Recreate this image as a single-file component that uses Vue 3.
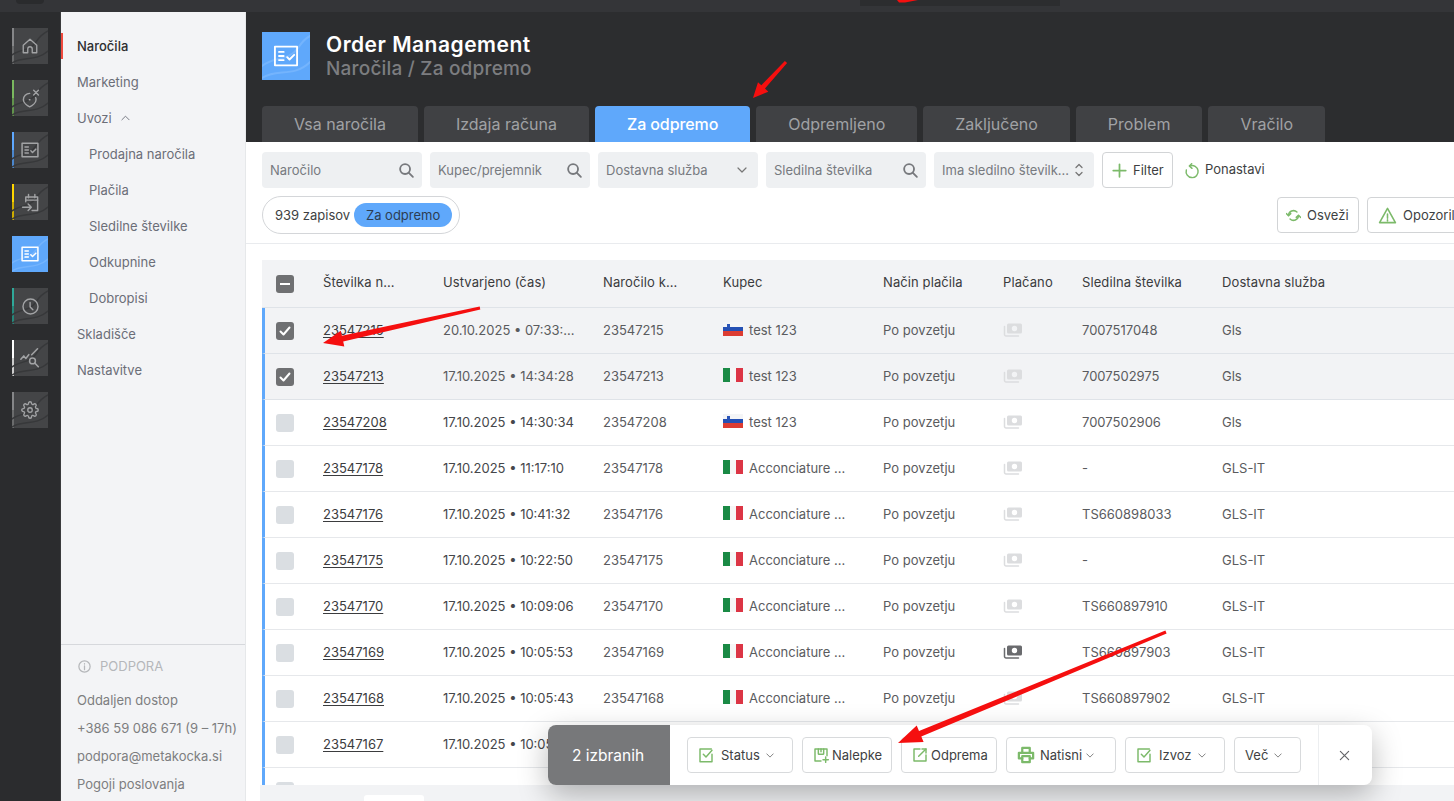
<script setup>
const icons = {
  home: ['M3 11 12 3l9 8v10h-6v-5a3 3 0 0 0-6 0v5H3z'],
  pin: ['M11 5.500a8 8 0 0 0-8 8c0 3.800 5 7.600 8 9 3-1.400 8-5.200 8-9 0-.9-.1-1.600-.4-2.400', 'M10.500 13.500h.8', 'M16 1.500l6 6M22 1.500l-6 6'],
  order: ['M2.500 4h19v16h-19z', 'M6 8.500h4M6 12h4M6 15.500h4', 'M13 13l2 2 4-4'],
  cal: ['M6 11V5h15v17h-7', 'M6 9h15', 'M9.500 2V6M17.500 2V6', 'M2 18h11M9 14l4 4-4 4'],
  clock: ['M12 2.500a9.500 9.500 0 1 1 0 19 9.500 9.500 0 0 1 0-19z', 'M11.500 7v5.500l3.500 3.500'],
  chart: ['M1 13.500 4.500 9.500l2.500 3 3.500-4.500', 'M14 8l7-7', 'M15 12a3.500 3.500 0 1 1 0 7 3.500 3.500 0 0 1 0-7z', 'M17.700 18 22 22.500'],
  gear: ['M12 9a3 3 0 1 1 0 6 3 3 0 0 1 0-6z', 'M19.4 15a1.65 1.65 0 0 0 .33 1.82l.06.06a2 2 0 0 1 0 2.83 2 2 0 0 1-2.83 0l-.06-.06a1.65 1.65 0 0 0-1.82-.33 1.65 1.65 0 0 0-1 1.51V21a2 2 0 0 1-2 2 2 2 0 0 1-2-2v-.09A1.65 1.65 0 0 0 9 19.4a1.65 1.65 0 0 0-1.82.33l-.06.06a2 2 0 0 1-2.83 0 2 2 0 0 1 0-2.83l.06-.06a1.65 1.65 0 0 0 .33-1.82 1.65 1.65 0 0 0-1.51-1H3a2 2 0 0 1-2-2 2 2 0 0 1 2-2h.09A1.65 1.65 0 0 0 4.6 9a1.65 1.65 0 0 0-.33-1.82l-.06-.06a2 2 0 0 1 0-2.83 2 2 0 0 1 2.83 0l.06.06a1.65 1.65 0 0 0 1.82.33H9a1.65 1.65 0 0 0 1-1.51V3a2 2 0 0 1 2-2 2 2 0 0 1 2 2v.09a1.65 1.65 0 0 0 1 1.51 1.65 1.65 0 0 0 1.82-.33l.06-.06a2 2 0 0 1 2.83 0 2 2 0 0 1 0 2.83l-.06.06a1.65 1.65 0 0 0-.33 1.82V9a1.65 1.65 0 0 0 1.51 1H21a2 2 0 0 1 2 2 2 2 0 0 1-2 2h-.09a1.65 1.65 0 0 0-1.51 1z'],
  check: ['M21 11v11H3V3h17', 'M8 11l4 4 9-10'],
  label: ['M12 21H3V3h18v10', 'M8 3v7a1 1 0 0 0 1 1h6a1 1 0 0 0 1-1V3', 'M12 7V3', 'M19 15v8M15 19h8'],
  send: ['M12 3H3v18h18v-9', 'M10 14 21 3', 'M15 3h6v6'],
  print: ['M7 8V2.500h10V8', 'M7 16.500H2.500V9h19v7.500H17', 'M7 13.500h10v8H7z'],
  search: ['M10 3a7 7 0 1 1 0 14 7 7 0 0 1 0-14z', 'M15 15 21 21'],
  plus: ['M12 2v20M2 12h20'],
  reset: ['M9 4.500a9 9 0 1 1-5.500 6', 'M11.500 1 8 4.500 12 8'],
  sync: ['M4 12a8 8 0 0 1 13.500-5.500', 'M20 12a8 8 0 0 1-13.500 5.500', 'M0.500 9 4 12.500 7.500 9', 'M16.500 15 20 11.500 23.500 15'],
  warn: ['M12 3 2 21h20z', 'M12 10v5.500M12 17.500v1.500'],
  info: ['M12 3a9 9 0 1 1 0 18 9 9 0 0 1 0-18z', 'M12 11v6M12 7.500v.5'],
}
const rail = [
  { i: 'home', c: '#858688', s: 18 }, { i: 'pin', c: '#7ab85f', s: 19 }, { i: 'order', c: '#5ea8ff', s: 20 }, { i: 'cal', c: '#ffd600', s: 19 },
  { i: 'order', c: '#5ea8ff', active: true, s: 20 }, { i: 'clock', c: '#2fa899', s: 19 }, { i: 'chart', c: '#ffffff', s: 20 }, { i: 'gear', c: '#858688', s: 18 },
]
const nav = [
  { t: 'Naročila', active: true }, { t: 'Marketing' }, { t: 'Uvozi', open: true },
  { t: 'Prodajna naročila', sub: true }, { t: 'Plačila', sub: true }, { t: 'Sledilne številke', sub: true },
  { t: 'Odkupnine', sub: true }, { t: 'Dobropisi', sub: true }, { t: 'Skladišče' }, { t: 'Nastavitve' },
]
const tabs = ['Vsa naročila', 'Izdaja računa', 'Za odpremo', 'Odpremljeno', 'Zaključeno', 'Problem', 'Vračilo']
const filters = [
  { t: 'Naročilo', k: 'search' }, { t: 'Kupec/prejemnik', k: 'search' }, { t: 'Dostavna služba', k: 'down' },
  { t: 'Sledilna številka', k: 'search' }, { t: 'Ima sledilno številk...', k: 'updown' },
]
const heads = ['Številka n...', 'Ustvarjeno (čas)', 'Naročilo k...', 'Kupec', 'Način plačila', 'Plačano', 'Sledilna številka', 'Dostavna služba']
const a = 'Acconciature ...'
const rows = [
  { n: '23547215', d: '20.10.2025 • 07:33:...', f: 'si', b: 'test 123', s: '7007517048', c: 'Gls', sel: true },
  { n: '23547213', d: '17.10.2025 • 14:34:28', f: 'it', b: 'test 123', s: '7007502975', c: 'Gls', sel: true },
  { n: '23547208', d: '17.10.2025 • 14:30:34', f: 'si', b: 'test 123', s: '7007502906', c: 'Gls' },
  { n: '23547178', d: '17.10.2025 • 11:17:10', f: 'it', b: a, s: '-', c: 'GLS-IT' },
  { n: '23547176', d: '17.10.2025 • 10:41:32', f: 'it', b: a, s: 'TS660898033', c: 'GLS-IT' },
  { n: '23547175', d: '17.10.2025 • 10:22:50', f: 'it', b: a, s: '-', c: 'GLS-IT' },
  { n: '23547170', d: '17.10.2025 • 10:09:06', f: 'it', b: a, s: 'TS660897910', c: 'GLS-IT' },
  { n: '23547169', d: '17.10.2025 • 10:05:53', f: 'it', b: a, s: 'TS660897903', c: 'GLS-IT', paid: true },
  { n: '23547168', d: '17.10.2025 • 10:05:43', f: 'it', b: a, s: 'TS660897902', c: 'GLS-IT' },
  { n: '23547167', d: '17.10.2025 • 10:05', covered: true },
  { n: '', d: '', covered: true },
]
const actions = [
  { t: 'Status', i: 'check', menu: true, w: 106 }, { t: 'Nalepke', i: 'label', w: 90, tight: true }, { t: 'Odprema', i: 'send', w: 96, tight: true },
  { t: 'Natisni', i: 'print', menu: true, w: 110, heavy: true }, { t: 'Izvoz', i: 'check', menu: true, w: 100 }, { t: 'Več', menu: true, w: 67 },
]
function arrow(x1, y1, x2, y2, hl, hw, w) {
  const L = Math.hypot(x2 - x1, y2 - y1)
  const ux = (x2 - x1) / L, uy = (y2 - y1) / L, nx = -uy, ny = ux
  const bx = x2 - ux * hl, by = y2 - uy * hl
  const p = [
    [x1 + nx * 1.5, y1 + ny * 1.5], [bx + nx * w, by + ny * w], [bx + nx * hw, by + ny * hw], [x2, y2],
    [bx - nx * hw, by - ny * hw], [bx - nx * w, by - ny * w], [x1 - nx * 1.5, y1 - ny * 1.5],
  ]
  return p.map(q => q[0].toFixed(1) + ',' + q[1].toFixed(1)).join(' ')
}
const arrows = [
  arrow(786, 62, 753, 98, 15, 7, 2.5), arrow(480, 308, 323, 343, 20, 8, 3), arrow(1166, 632, 898, 743, 24, 9, 3),
]
</script>

<template>
  <div class="app">
    <header class="topbar">
      <span class="top-a"></span>
      <span class="top-b"></span>
    </header>
    <div class="body">
      <nav class="rail">
        <div v-for="(r, x) in rail" :key="x" class="tile" :class="{ on: r.active }">
          <i class="strip" :style="{ background: r.c }"></i>
          <svg class="waves" viewBox="0 0 36 36"><path d="M0 27C9 20 17 24 24 14 28 8 32 5 36 3M0 35C10 28 24 34 36 23" /></svg>
          <svg class="ic" viewBox="0 0 24 24" :style="{ width: r.s + 'px', height: r.s + 'px' }"><path v-for="d in icons[r.i]" :key="d" :d="d" /></svg>
        </div>
      </nav>
      <aside class="side">
        <ul class="menu">
          <li v-for="n in nav" :key="n.t" :class="{ active: n.active, sub: n.sub }">
            {{ n.t }}
            <svg v-if="n.open" class="up" viewBox="0 0 10 6"><path d="M1 5l4-4 4 4" /></svg>
          </li>
        </ul>
        <div class="support">
          <div class="sup-h">
            <svg viewBox="0 0 24 24"><path v-for="d in icons.info" :key="d" :d="d" /></svg>
            PODPORA
          </div>
          <p>Oddaljen dostop</p>
          <p>+386 59 086 671 (9 – 17h)</p>
          <p>podpora@metakocka.si</p>
          <p>Pogoji poslovanja</p>
        </div>
      </aside>
      <main class="main">
        <section class="hero">
          <div class="title-row">
            <div class="logo">
              <svg class="logo-w" viewBox="0 0 48 48"><path d="M0 34C12 24 26 30 36 16 40 10 44 6 48 4M0 46C14 36 32 46 48 30" /></svg>
              <svg class="logo-i" viewBox="0 0 24 24"><path v-for="d in icons.order" :key="d" :d="d" /></svg>
            </div>
            <div class="titles">
              <h1>Order Management</h1>
              <h2>Naročila / Za odpremo</h2>
            </div>
          </div>
          <div class="tabs">
            <div v-for="t in tabs" :key="t" class="tab" :class="{ on: t === 'Za odpremo' }">{{ t }}</div>
          </div>
        </section>
        <section class="tools">
          <div class="filters">
            <div v-for="f in filters" :key="f.t" class="field">
              <span>{{ f.t }}</span>
              <svg v-if="f.k === 'search'" class="f-search" viewBox="0 0 24 24"><path v-for="d in icons.search" :key="d" :d="d" /></svg>
              <svg v-else-if="f.k === 'down'" class="f-down" viewBox="0 0 10 6"><path d="M1 1l4 4 4-4" /></svg>
              <svg v-else class="f-ud" viewBox="0 0 10 16"><path d="M2 5.500 5 2.500l3 3M2 10.500l3 3 3-3" /></svg>
            </div>
            <button class="btn filter">
              <svg class="g-ic" viewBox="0 0 24 24"><path v-for="d in icons.plus" :key="d" :d="d" /></svg>
              Filter
            </button>
            <div class="reset">
              <svg class="g-ic" viewBox="0 0 24 24"><path v-for="d in icons.reset" :key="d" :d="d" /></svg>
              Ponastavi
            </div>
          </div>
          <div class="second">
            <div class="chip">939 zapisov <span class="pill">Za odpremo</span></div>
            <button class="btn refresh">
              <svg class="g-ic" viewBox="0 0 24 24"><path v-for="d in icons.sync" :key="d" :d="d" /></svg>
              Osveži
            </button>
            <button class="btn alert">
              <svg class="g-ic big" viewBox="0 0 24 24"><path v-for="d in icons.warn" :key="d" :d="d" /></svg>
              Opozorila
            </button>
          </div>
        </section>
        <section class="table-wrap">
          <div class="table">
            <div class="grid thead">
              <div class="cb-cell"><span class="cb dark dash"></span></div>
              <div v-for="h in heads" :key="h">{{ h }}</div>
            </div>
            <div v-for="(r, x) in rows" :key="x" class="grid row" :class="{ sel: r.sel }">
              <div class="cb-cell">
                <span class="cb" :class="{ dark: r.sel }">
                  <svg v-if="r.sel" viewBox="0 0 18 18"><path d="M4.500 9.500l3 3 6-7" /></svg>
                </span>
              </div>
              <div><a class="link">{{ r.n }}</a></div>
              <div class="date">{{ r.d }}</div>
              <template v-if="!r.covered">
                <div>{{ r.n }}</div>
                <div class="buyer">
                  <span class="flag" :class="r.f"><i></i><i></i><i></i></span>
                  {{ r.b }}
                </div>
                <div>Po povzetju</div>
                <div>
                  <svg class="cash" :class="{ paid: r.paid }" viewBox="0 0 20 16">
                    <path class="cash-a" d="M1.500 4.500v8a1.500 1.500 0 0 0 1.500 1.500h12.500" />
                    <path class="cash-b" fill-rule="evenodd" d="M5.500 1.500h12a1.500 1.500 0 0 1 1.500 1.500v7a1.500 1.500 0 0 1-1.500 1.500h-12A1.500 1.500 0 0 1 4 10V3a1.500 1.500 0 0 1 1.500-1.500zM11.500 3.800a2.700 2.700 0 1 0 0 5.400 2.700 2.700 0 0 0 0-5.400z" />
                  </svg>
                </div>
                <div>{{ r.s }}</div>
                <div>{{ r.c }}</div>
              </template>
            </div>
          </div>
          <footer class="foot"><span></span></footer>
        </section>
      </main>
    </div>

    <div class="actionbar">
      <div class="count">2 izbranih</div>
      <div class="acts">
        <button v-for="b in actions" :key="b.t" class="act" :class="{ tight: b.tight, heavy: b.heavy }" :style="{ width: b.w + 'px' }">
          <svg v-if="b.i" class="g-ic act-i" viewBox="0 0 24 24"><path v-for="d in icons[b.i]" :key="d" :d="d" /></svg>
          <span>{{ b.t }}</span>
          <svg v-if="b.menu" class="mini" viewBox="0 0 10 6"><path d="M1 1l4 4 4-4" /></svg>
        </button>
      </div>
      <div class="close">
        <svg viewBox="0 0 12 12"><path d="M1.500 1.500l9 9M10.500 1.500l-9 9" /></svg>
      </div>
    </div>

    <svg class="overlay" viewBox="0 0 1454 801">
      <polygon points="897,0 918,0 905,2.500 899,2.500" />
      <polygon v-for="p in arrows" :key="p" :points="p" />
    </svg>
  </div>
</template>

<style>
html, body { margin: 0; overflow: hidden; }
</style>

<style scoped>
* { box-sizing: border-box; }
.app { position: relative; width: 1454px; height: 801px; overflow: hidden; display: flex; flex-direction: column; font: 13px "Inter", "Liberation Sans", sans-serif; color: #555; background: #fff; }
svg path { fill: none; stroke: currentColor; stroke-linecap: round; stroke-linejoin: round; }
.topbar { height: 12px; flex: none; background: #343538; position: relative; }
.top-a { position: absolute; left: 16px; top: 0; width: 28px; height: 4px; background: #2a2b2d; border-radius: 0 0 4px 4px; }
.top-b { position: absolute; left: 860px; top: 0; width: 200px; height: 6px; background: #2c2d2f; }
.body { flex: 1; display: flex; min-height: 0; }

.rail { width: 61px; flex: none; background: #2b2c2e; padding: 16px 0 0 12px; display: flex; flex-direction: column; gap: 16px; border-right: 1px solid #3a3b3d; }
.tile { position: relative; width: 36px; height: 36px; background: #444547; display: flex; align-items: center; justify-content: center; color: #a2a3a5; }
.tile.on { background: #5fa8fb; color: #fff; }
.strip { position: absolute; left: 0; top: 0; bottom: 0; width: 2px; }
.strip::after { content: ""; position: absolute; inset: 50% 0 0; background: rgba(0, 0, 0, .2); }
.tile.on .strip { display: none; }
.waves { position: absolute; inset: 0; width: 36px; height: 36px; }
.waves path { stroke: #37383a; stroke-width: 1.400; }
.tile.on .waves path { stroke: #74b4fd; }
.ic { position: relative; }
.ic path { stroke-width: 1.800; }

.side { width: 185px; flex: none; background: #f3f4f6; border-right: 1px solid #e6e8ea; display: flex; flex-direction: column; color: #6b6e78; }
.menu { list-style: none; margin: 16px 0 0; padding: 0; flex: 1; }
.menu li { position: relative; height: 36px; line-height: 36px; padding-left: 16px; }
.menu li.sub { padding-left: 28px; }
.menu li.active { color: #2d2e30; font-weight: 500; }
.menu li.active::before { content: ""; position: absolute; left: 0; top: 5px; width: 2px; height: 26px; background: #f04a3e; }
.up { width: 9px; height: 6px; margin: 0 0 2px 6px; }
.up path { stroke-width: 1; }
.support { border-top: 1px solid #d6d8dc; padding: 11px 0 0 16px; height: 157px; color: #7d7e80; }
.support p { margin: 0; height: 28px; line-height: 28px; white-space: nowrap; }
.sup-h { display: flex; align-items: center; gap: 8px; color: #b5b7ba; height: 20px; margin-bottom: 10px; }
.sup-h svg { width: 15px; height: 15px; }
.sup-h path { stroke-width: 2; }

.main { flex: 1; min-width: 0; display: flex; flex-direction: column; }
.hero { height: 130px; flex: none; background: #2c2d2f; padding: 20px 0 0 16px; display: flex; flex-direction: column; justify-content: space-between; }
.title-row { display: flex; gap: 16px; align-items: flex-start; }
.titles { padding-top: 1px; }
.logo { position: relative; width: 48px; height: 48px; background: #5fa8fb; display: flex; align-items: center; justify-content: center; color: #fff; }
.logo-w { position: absolute; inset: 0; }
.logo-w path { stroke: #74b4fd; stroke-width: 2; }
.logo-i { position: relative; width: 28px; height: 28px; }
.logo-i path { stroke-width: 1.600; }
h1 { margin: 0; font-size: 21px; line-height: 24px; font-weight: 600; color: #fff; letter-spacing: .5px; }
h2 { margin: 0; font-size: 19px; line-height: 24px; font-weight: 500; color: #7c7d80; letter-spacing: .2px; }
.tabs { display: flex; gap: 6px; }
.tab { height: 36px; line-height: 37px; padding: 0 32px; background: #404144; color: #a0a2a5; border-radius: 4px 4px 0 0; font-size: 16px; white-space: nowrap; }
.tab.on { background: #5fa8fb; color: #fff; font-weight: 500; letter-spacing: -.1px; }

.tools { flex: none; height: 102px; padding: 10px 0 0 16px; border-bottom: 1px solid #e9ebee; }
.filters { display: flex; gap: 8px; height: 36px; }
.field { width: 160px; height: 36px; background: #eef0f2; border-radius: 4px; padding: 0 8px; display: flex; align-items: center; justify-content: space-between; color: #777a80; white-space: nowrap; }
.f-search { width: 17px; height: 17px; color: #77797d; margin-right: -1px; }
.f-search path { stroke-width: 2.600; }
.f-down { width: 10px; height: 6px; margin-right: 3px; color: #777; }
.f-down path { stroke-width: 1.200; }
.f-ud { width: 10px; height: 16px; margin-right: 2px; color: #777; }
.f-ud path { stroke-width: 1.300; }
.btn { height: 36px; background: #fff; border: 1px solid #d2d4d6; border-radius: 4px; display: flex; align-items: center; font: 13px "Inter", "Liberation Sans", sans-serif; color: #3e3f42; white-space: nowrap; flex: none; }
.g-ic { color: #7cba6a; width: 15px; height: 15px; flex: none; }
.g-ic path { stroke-width: 2.400; }
.filter { width: 71px; padding: 0 0 0 9px; gap: 6px; }
.filter .g-ic path { stroke-width: 2.800; }
.reset { display: flex; align-items: center; gap: 5px; margin-left: 3px; color: #3e3f42; padding-bottom: 2px; }
.reset .g-ic { width: 16px; height: 16px; margin-top: 4px; }
.reset .g-ic path { stroke-width: 2.200; }
.second { display: flex; margin-top: 8px; align-items: flex-start; }
.chip { width: 198px; height: 38px; border: 1px solid #d4d6d9; border-radius: 19px; display: flex; align-items: center; padding-left: 12px; gap: 4px; color: #3e3f42; white-space: nowrap; flex: none; }
.pill { width: 98px; height: 24px; border-radius: 12px; background: #5fa8fb; color: #2d3d52; display: flex; align-items: center; justify-content: center; }
.refresh { width: 82px; margin: 1px 0 0 817px; padding-left: 8px; gap: 6px; }
.alert { width: 110px; margin: 1px 0 0 8px; padding-left: 10px; gap: 6px; }
.big { width: 19px; height: 19px; }
.big path { stroke-width: 2; }

.table-wrap { flex: 1; min-height: 0; display: flex; flex-direction: column; padding: 16px 0 0 16px; }
.table { flex: 1; min-height: 0; overflow: hidden; }
.grid { display: grid; grid-template-columns: 61px 120px 160px 120px 160px 120px 79px 140px 1fr; align-items: center; white-space: nowrap; }
.thead { height: 48px; padding-bottom: 4px; background: #f2f3f5; border-bottom: 1px solid #dfe3e8; color: #3a3b3d; letter-spacing: .1px; }
.thead .cb-cell { margin-top: 4px; }
.row { height: 46px; padding-bottom: 2px; grid-template-columns: 58px 120px 160px 120px 160px 120px 79px 140px 1fr; border-bottom: 1px solid #e6e8eb; border-left: 3px solid #5fa8fb; color: #5a5b5e; }
.row.sel { background: #f2f3f5; border-bottom-color: #dfe3e8; }
.row .cb-cell { margin: 2px 0 0 -3px; }
.cb-cell { padding-left: 14px; display: flex; align-items: center; }
.cb { width: 18px; height: 18px; border-radius: 3px; background: #dadee2; display: flex; align-items: center; justify-content: center; }
.cb.dark { background: #6f7072; color: #fff; }
.cb svg { width: 18px; height: 18px; }
.cb path { stroke-width: 2; }
.dash::before { content: ""; width: 10px; height: 2px; background: #fff; }
.link { color: #3b3c3e; text-decoration: underline; text-underline-offset: 2px; }
.row:not(.sel) .date { color: #45464a; }
.buyer { display: flex; align-items: center; gap: 6px; }
.flag { position: relative; width: 20px; height: 14px; display: flex; flex-direction: column; margin-top: -1px; }
.flag i { flex: 1; }
.flag.si i:nth-child(1) { background: #f4f5f7; }
.flag.si i:nth-child(2) { background: #2450b4; }
.flag.si i:nth-child(3) { background: #dc3c32; }
.flag.si::after { content: ""; position: absolute; left: 4px; top: 2px; width: 3px; height: 4px; background: #2a55b8; border-radius: 0 0 2px 2px; }
.flag.it { flex-direction: row; }
.flag.it i:nth-child(1) { background: #1a8a45; }
.flag.it i:nth-child(2) { background: #f6f6f6; }
.flag.it i:nth-child(3) { background: #dc3545; }
.cash { display: block; width: 20px; height: 16px; color: #dcdddf; }
.cash-a { stroke-width: 1.500; }
.cash .cash-b { fill: currentColor; stroke: none; }
.cash.paid { color: #6a6b6e; }
.foot { height: 16px; flex: none; background: #f2f3f5; margin-left: -2px; position: relative; }
.foot span { position: absolute; left: 104px; top: 10px; width: 60px; height: 6px; background: #fff; border-radius: 3px 3px 0 0; }

.actionbar { position: absolute; left: 548px; bottom: 16px; width: 824px; height: 60px; background: #fff; border-radius: 8px; display: flex; box-shadow: 0 10px 30px rgba(0, 0, 0, .28); overflow: hidden; z-index: 5; }
.count { width: 122px; flex: none; background: #77787a; color: #fff; font-size: 15.500px; display: flex; align-items: center; justify-content: center; padding-right: 2px; }
.acts { flex: 1; display: flex; gap: 9px; align-items: center; padding-left: 17px; }
.act { height: 36px; flex: none; background: #fff; border: 1px solid #d8dadc; border-radius: 4px; padding: 0 0 0 10px; display: flex; align-items: center; gap: 7px; font: 13px "Inter", "Liberation Sans", sans-serif; color: #3e3f42; }
.act-i { width: 16px; height: 16px; }
.act-i path { stroke-width: 2.200; }
.act.tight { gap: 3px; }
.act.heavy { gap: 5px; }
.act.heavy .act-i { width: 18px; height: 18px; }
.act.heavy .act-i path { stroke-width: 3; }
.mini { width: 8px; height: 5px; margin-left: -1px; color: #666; }
.mini path { stroke-width: 1; }
.close { width: 54px; flex: none; border-left: 1px solid #eceef0; padding-right: 2px; display: flex; align-items: center; justify-content: center; color: #66676a; }
.close svg { width: 11px; height: 11px; }
.close path { stroke-width: 1.300; }

.overlay { position: absolute; inset: 0; width: 1454px; height: 801px; pointer-events: none; z-index: 9; }
.overlay polygon { fill: #f50f0f; }
</style>
